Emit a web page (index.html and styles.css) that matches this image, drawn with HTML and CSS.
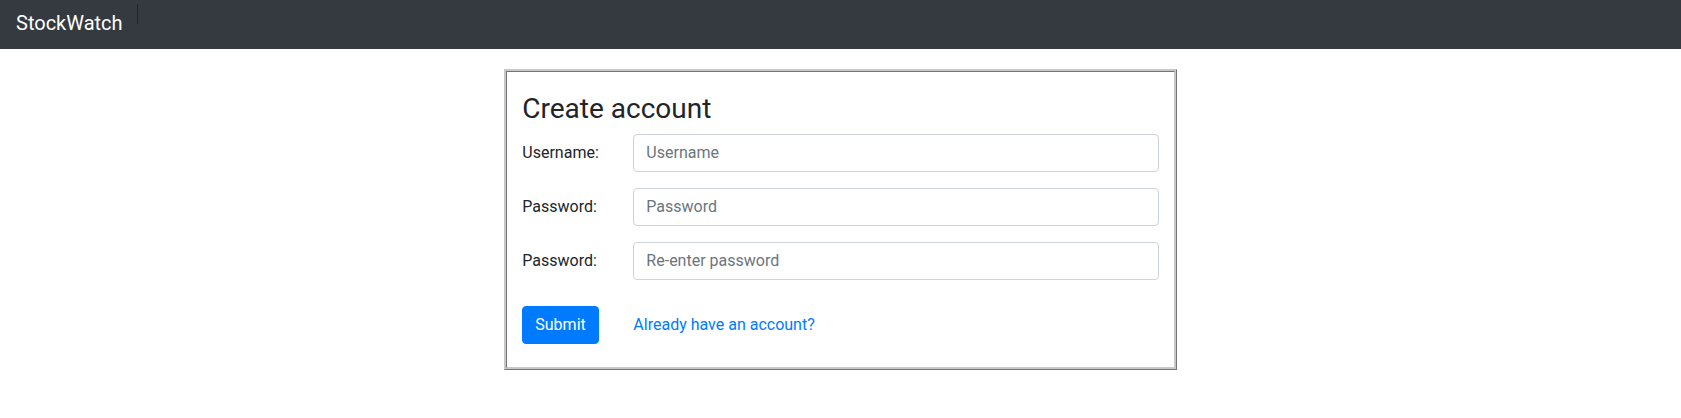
FILE: index.html
```html
<!DOCTYPE html>
<html lang="en">
<head>
<meta charset="utf-8">
<title>StockWatch</title>
<link rel="stylesheet" href="styles.css">
</head>
<body>
<nav class="navbar">
  <a class="brand" href="#">StockWatch</a>
  <span class="divider"></span>
</nav>
<main class="page">
  <form class="card">
    <h3 class="title">Create account</h3>
    <div class="row group">
      <label class="col-label" for="u">Username:</label>
      <div class="col-field"><input id="u" class="input" type="text" placeholder="Username"></div>
    </div>
    <div class="row group">
      <label class="col-label" for="p1">Password:</label>
      <div class="col-field"><input id="p1" class="input" type="password" placeholder="Password"></div>
    </div>
    <div class="row group">
      <label class="col-label" for="p2">Password:</label>
      <div class="col-field"><input id="p2" class="input" type="password" placeholder="Re-enter password"></div>
    </div>
    <div class="row actions">
      <div class="col-btn"><button class="btn" type="submit">Submit</button></div>
      <div class="col-link"><a class="link" href="#">Already have an account?</a></div>
    </div>
  </form>
</main>
</body>
</html>
```
FILE: styles.css
```css
* { box-sizing: border-box; }
html, body { margin: 0; padding: 0; }
body {
  font-family: "Segoe UI", Roboto, "Liberation Sans", sans-serif;
  font-size: 16px;
  line-height: 1.5;
  color: #212529;
  background: #fff;
}
.navbar {
  height: 49px;
  background: #343a40;
  display: flex;
  align-items: flex-start;
  padding: 0 16px;
}
.brand {
  color: #fff;
  font-size: 20px;
  line-height: 30px;
  padding-top: 8px;
  text-decoration: none;
  margin-right: 14px;
}
.divider {
  width: 1px;
  height: 20px;
  margin-top: 4px;
  background: #1f2326;
}
.page {
  display: flex;
  justify-content: center;
  padding-top: 20px;
}
.card {
  width: 40%;
  border: 3px ridge #c8c8c8;
  padding: 20px 15px 23px;
}
.title {
  margin: 0 0 8px;
  font-size: 28px;
  font-weight: 400;
  line-height: 1.2;
}
.row {
  display: flex;
  margin: 0 -15px;
}
.group { margin-bottom: 16px; }
.actions { margin-top: 26px; }
.col-label, .col-btn {
  flex: 0 0 16.6667%;
  padding: 7px 15px;
}
.col-btn { padding: 0 15px; }
.col-field, .col-link {
  flex: 0 0 83.3333%;
  padding: 0 15px;
}
.col-link { padding-top: 7px; }
.input {
  display: block;
  width: 100%;
  height: 38px;
  padding: 6px 12px;
  font: inherit;
  color: #495057;
  border: 1px solid #ced4da;
  border-radius: 4px;
  background: #fff;
}
.input::placeholder { color: #6c757d; opacity: 1; }
.btn {
  font: inherit;
  color: #fff;
  background: #007bff;
  border: 1px solid #007bff;
  border-radius: 4px;
  padding: 6px 12px;
  line-height: 1.5;
}
.link {
  color: #007bff;
  text-decoration: none;
}
```
